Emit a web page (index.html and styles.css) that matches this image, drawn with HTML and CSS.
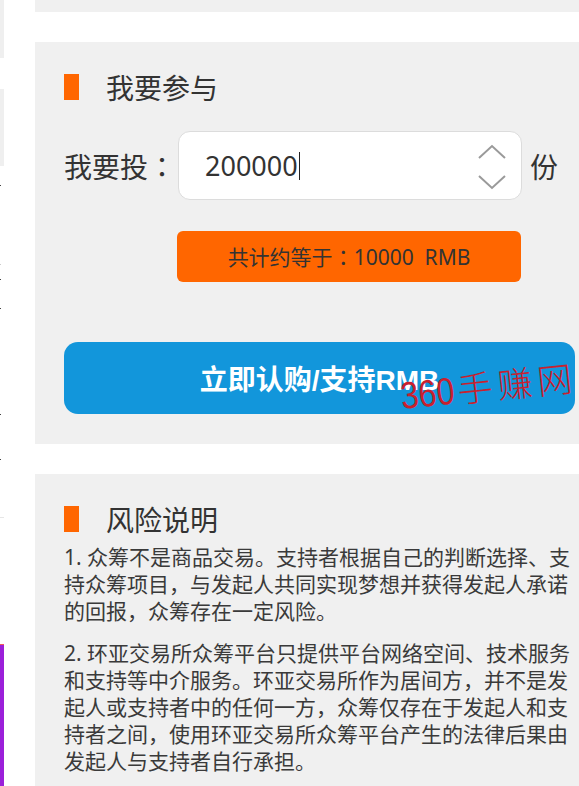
FILE: index.html
```html
<!DOCTYPE html>
<html lang="zh-CN">
<head>
    <meta charset="UTF-8">
    <meta name="viewport" content="width=device-width, initial-scale=1.0">
    <title>我要参与</title>
    <link rel="stylesheet" href="styles.css">
</head>
<body>
    <div class="page">
        <div class="side">
            <div class="side-block top"></div>
            <div class="side-block mid"></div>
            <div class="side-dot d1"></div>
            <div class="side-dot d2"></div>
            <div class="side-dot d3"></div>
            <div class="side-dot d4"></div>
            <div class="side-dot d5"></div>
            <div class="side-dot d6"></div>
            <div class="side-line"></div>
            <div class="side-bar"></div>
        </div>

        <div class="main">
            <div class="panel panel-end"></div>

            <div class="panel join">
                <h3 class="title"><span class="mark"></span>我要参与</h3>
                <div class="invest-row">
                    <span class="invest-label">我要投<span class="pc" lang="zh-TW">：</span></span>
                    <div class="amount-box">
                        <span class="amount">200000</span><span class="caret"></span>
                        <svg class="spinner" width="30" height="50" viewBox="0 0 30 50">
                            <polyline points="2,16 15,4 28,16" fill="none" stroke="#9a9a9a" stroke-width="2"/>
                            <polyline points="2,34 15,46 28,34" fill="none" stroke="#9a9a9a" stroke-width="2"/>
                        </svg>
                    </div>
                    <span class="unit">份</span>
                </div>
                <div class="total">共计约等于<span class="pc" lang="zh-TW">：</span>10000&nbsp;&nbsp;RMB</div>
                <button class="submit">立即认购/支持RMB</button>
                <div class="watermark"><span class="wm-num">360</span>手赚网</div>
            </div>

            <div class="panel risk">
                <h3 class="title"><span class="mark"></span>风险说明</h3>
                <p class="risk-text">1. 众筹不是商品交易。支持者根据自己的判断选择、支持众筹项目，与发起人共同实现梦想并获得发起人承诺的回报，众筹存在一定风险。</p>
                <p class="risk-text">2. 环亚交易所众筹平台只提供平台网络空间、技术服务和支持等中介服务。环亚交易所作为居间方，并不是发起人或支持者中的任何一方，众筹仅存在于发起人和支持者之间，使用环亚交易所众筹平台产生的法律后果由发起人与支持者自行承担。</p>
            </div>
        </div>
    </div>
</body>
</html>
```

FILE: styles.css
```css
body {
    margin: 0;
    background: #fff;
    font-family: "Noto Sans", "Noto Sans CJK SC", sans-serif;
    color: #333;
}
.page {
    display: flex;
    width: 579px;
    height: 786px;
    overflow: hidden;
}
.side {
    width: 35px;
    flex-shrink: 0;
    display: flex;
    flex-direction: column;
}
.side-block {
    width: 4px;
    background: #efefef;
}
.side-block.top {
    height: 58px;
}
.side-block.mid {
    height: 77px;
    margin-top: 31px;
}
.side-dot {
    width: 1px;
    height: 1px;
    background: #444;
}
.d1 { margin-top: 19px; }
.d2 { margin-top: 78px; background: #ccc; }
.d3 { margin-top: 14px; }
.d4 { margin-top: 28px; }
.d5 { margin-top: 105px; }
.d6 { margin-top: 44px; }
.side-line {
    width: 4px;
    height: 1px;
    margin-top: 57px;
    background: #e6e6e6;
}
.side-bar {
    width: 4px;
    margin-top: 126px;
    flex: 1;
    background: #9b1fd9;
    border-top: 1px solid #f25a5a;
}
.main {
    flex: 1;
    display: flex;
    flex-direction: column;
    gap: 30px;
}
.panel {
    flex-shrink: 0;
    background: #f0f0f0;
    padding: 30px 0 30px 29px;
}
.panel-end {
    height: 12px;
    padding: 0;
}
.join {
    position: relative;
    height: 342px;
}
.pc {
    font-family: "Noto Sans CJK TC", sans-serif;
}
.title {
    display: flex;
    align-items: center;
    margin: 0;
    height: 30px;
    font-size: 28px;
    font-weight: normal;
    color: #333;
}
.mark {
    width: 15px;
    height: 26px;
    margin-right: 27px;
    background: #ff6600;
}
.invest-row {
    display: flex;
    align-items: center;
    margin-top: 29px;
}
.invest-label {
    width: 114px;
    font-size: 28px;
}
.amount-box {
    position: relative;
    display: flex;
    align-items: center;
    width: 316px;
    height: 67px;
    padding-left: 26px;
    background: #fff;
    border: 1px solid #dcdcdc;
    border-radius: 12px;
}
.amount {
    font-size: 27px;
    color: #333;
}
.caret {
    width: 1px;
    height: 28px;
    margin-left: 1px;
    background: #222;
}
.spinner {
    position: absolute;
    right: 14px;
    top: 10px;
}
.unit {
    margin-left: 8px;
    font-size: 28px;
}
.total {
    width: 344px;
    height: 51px;
    margin: 31px 0 0 113px;
    line-height: 51px;
    text-align: center;
    font-size: 21px;
    color: #333;
    background: #ff6600;
    border-radius: 6px;
}
.submit {
    display: block;
    width: 511px;
    height: 72px;
    margin-top: 60px;
    border: none;
    border-radius: 14px;
    background: #1296db;
    color: #fff;
    font-family: "Liberation Sans", "Noto Sans CJK SC", sans-serif;
    font-size: 28px;
    font-weight: bold;
}
.watermark {
    position: absolute;
    left: 368px;
    top: 326px;
    white-space: nowrap;
    color: #c8202e;
    font-family: "Noto Sans CJK SC", sans-serif;
    font-size: 35px;
    font-weight: 300;
    letter-spacing: 5px;
    transform: rotate(-6deg);
    transform-origin: left bottom;
}
.wm-num {
    display: inline-block;
    font-family: "Liberation Sans", sans-serif;
    font-size: 38px;
    letter-spacing: 0;
    transform: scaleX(0.85);
    transform-origin: left center;
    margin-right: -6px;
}
.risk {
    flex: 1;
}
.risk-text {
    width: 510px;
    margin: 10px 0 0;
    font-size: 21px;
    line-height: 27px;
    color: #3a3a3a;
}
.risk-text + .risk-text {
    margin-top: 15px;
}
```
